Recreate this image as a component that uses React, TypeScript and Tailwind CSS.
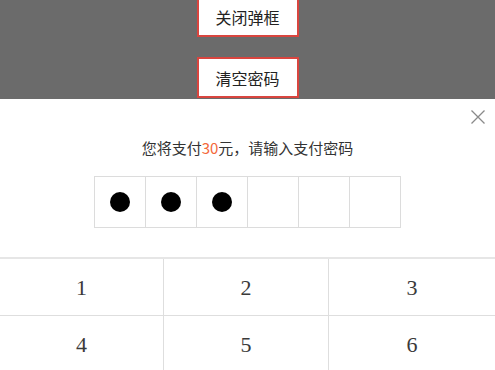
import React from "react";

export default function App() {
  const filled = 3;
  const keys = ["1", "2", "3", "4", "5", "6"];
  return (
    <div className="w-[495px] h-[370px] overflow-hidden bg-white" style={{ fontFamily: '"Noto Sans CJK SC", "Noto Sans", sans-serif' }}>
      <div className="h-[99px] bg-[#6b6b6b] flex flex-col items-center overflow-hidden">
        <button className="mt-[-4px] w-[102px] h-[41px] bg-white border-2 border-[#d9453f] text-[16px] text-[#222] flex items-center justify-center">
          关闭弹框
        </button>
        <button className="mt-[20px] w-[102px] h-[41px] bg-white border-2 border-[#d9453f] text-[16px] text-[#222] flex items-center justify-center">
          清空密码
        </button>
      </div>
      <div className="relative">
        <svg className="absolute right-[9px] top-[10px]" width="16" height="16" viewBox="0 0 16 16">
          <path d="M1.5 1.5 L14.5 14.5 M14.5 1.5 L1.5 14.5" stroke="#8a8a8a" strokeWidth="1.3" fill="none" />
        </svg>
        <div className="pt-[39px] text-center text-[15px] leading-[20px] text-[#333]">
          您将支付<span className="text-[#f4683a]">30</span>元，请输入支付密码
        </div>
        <div className="mt-[18px] flex justify-center">
          <div className="flex border-l border-y border-[#dcdcdc]">
            {[0, 1, 2, 3, 4, 5].map((i) => (
              <div key={i} className="w-[51px] h-[50px] flex items-center justify-center border-r border-[#dcdcdc]">
                {i < filled && <div className="w-[20px] h-[20px] rounded-full bg-black" />}
              </div>
            ))}
          </div>
        </div>
        <div className="mt-[29px] border-t-2 border-[#e6e6e6] grid grid-cols-[164px_165px_166px]">
          {keys.map((k, i) => (
            <div
              key={k}
              className={`h-[57px] flex items-center justify-center text-[22px] text-[#3a3a3a] border-b border-[#dedede] ${i % 3 !== 2 ? "border-r" : ""}`}
              style={{ fontFamily: '"Liberation Serif", "DejaVu Serif", serif' }}
            >
              {k}
            </div>
          ))}
        </div>
      </div>
    </div>
  );
}
